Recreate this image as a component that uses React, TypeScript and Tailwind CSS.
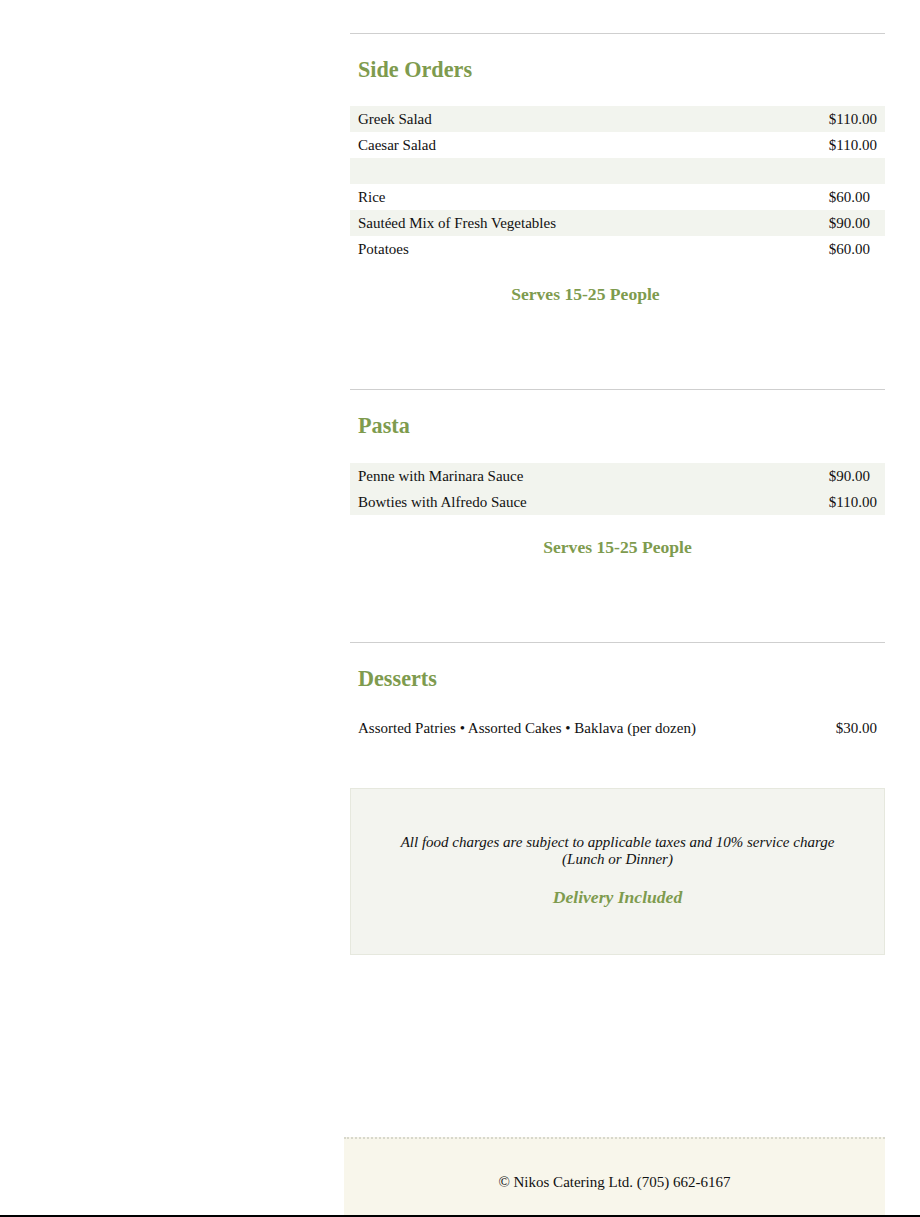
import React from "react"

type Item = { name: string; price: string }

const sideOrders: Item[] = [
  { name: "Greek Salad", price: "$110.00" },
  { name: "Caesar Salad", price: "$110.00" },
  { name: "", price: "" },
  { name: "Rice", price: "$60.00" },
  { name: "Sautéed Mix of Fresh Vegetables", price: "$90.00" },
  { name: "Potatoes", price: "$60.00" },
]

const pasta: Item[] = [
  { name: "Penne with Marinara Sauce", price: "$90.00" },
  { name: "Bowties with Alfredo Sauce", price: "$110.00" },
]

const SectionTitle = ({ children }: { children: React.ReactNode }) => (
  <>
    <div className="h-px bg-[#cfcfcf]" />
    <h2 className="mt-[23px] px-2 text-[22.2px] leading-[26px] font-bold text-[#7e9b4e]">{children}</h2>
  </>
)

const Serves = () => (
  <p className="text-center text-[17.6px] leading-[20px] font-bold text-[#7e9b4e]">Serves 15-25 People</p>
)

export default function App() {
  return (
    <div className="min-h-[1217px] bg-white text-[15px] text-[#111] font-['Liberation_Serif','Times_New_Roman',serif]">
      <div className="ml-[344px] w-[541px]">
        <main className="ml-[6px] pt-[33px]">
          {/* Side Orders */}
          <section>
            <SectionTitle>Side Orders</SectionTitle>
            <table className="mt-[23px] w-full border-collapse">
              <tbody>
                {sideOrders.map((item, i) => (
                  <tr key={i} className={i % 2 === 0 ? "bg-[#f2f4ee]" : ""}>
                    <td className="h-[26px] px-2 leading-[18px]">{item.name}</td>
                    <td className="h-[26px] px-2 leading-[18px] whitespace-nowrap w-px">{item.price}</td>
                  </tr>
                ))}
                <tr>
                  <td className="pt-[22px]">
                    <Serves />
                  </td>
                  <td />
                </tr>
              </tbody>
            </table>
          </section>

          {/* Pasta */}
          <section className="mt-[85px]">
            <SectionTitle>Pasta</SectionTitle>
            <table className="mt-[24px] w-full border-collapse">
              <tbody>
                {pasta.map((item, i) => (
                  <tr key={i} className="bg-[#f2f4ee]">
                    <td className="h-[26px] px-2 leading-[18px]">{item.name}</td>
                    <td className="h-[26px] px-2 leading-[18px] whitespace-nowrap w-px">{item.price}</td>
                  </tr>
                ))}
              </tbody>
            </table>
            <div className="mt-[22px]">
              <Serves />
            </div>
          </section>

          {/* Desserts */}
          <section className="mt-[85px]">
            <SectionTitle>Desserts</SectionTitle>
            <table className="mt-[23px] w-full border-collapse">
              <tbody>
                <tr>
                  <td className="h-[26px] px-2 leading-[18px]">
                    Assorted Patries • Assorted Cakes • Baklava (per dozen)
                  </td>
                  <td className="h-[26px] px-2 leading-[18px] whitespace-nowrap w-px">$30.00</td>
                </tr>
              </tbody>
            </table>
          </section>

          {/* Notes */}
          <div className="mt-[47px] h-[167px] border border-[#e6e8de] bg-[#f3f4ef] pt-[45px] text-center">
            <p className="italic leading-[17px]">
              All food charges are subject to applicable taxes and 10% service charge
              <br />
              (Lunch or Dinner)
            </p>
            <p className="mt-[19px] text-[17.6px] leading-[20px] font-bold italic text-[#7e9b4e]">Delivery Included</p>
          </div>
        </main>

        <footer className="mt-[182px] h-[78px] border-t-2 border-dotted border-[#d8d8cc] bg-[#f8f6eb] pt-[34px] text-center leading-[18px]">
          © Nikos Catering Ltd. (705) 662-6167
        </footer>
      </div>
      <div className="h-[2px] bg-black" />
    </div>
  )
}
